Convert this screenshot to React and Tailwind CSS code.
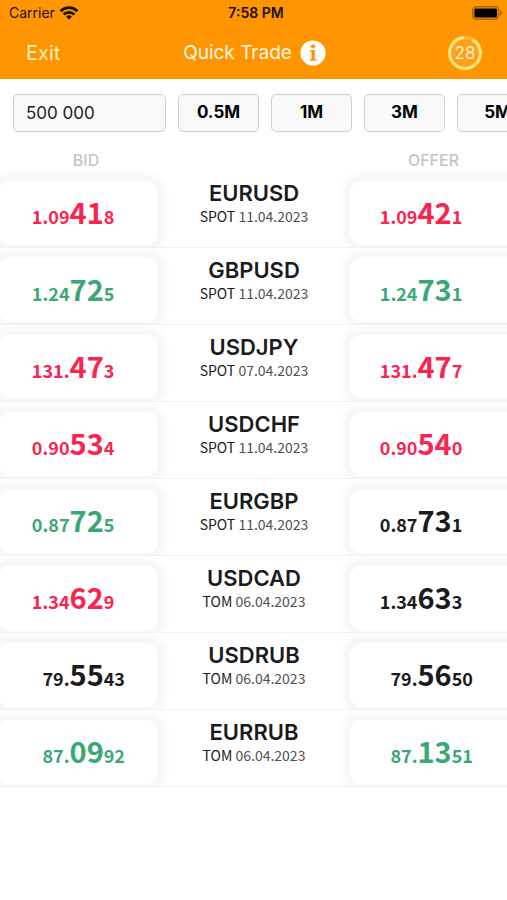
import React, { useState } from "react";

const quotes = [
  { pair: "EURUSD", tenor: "SPOT", date: "11.04.2023", bid: ["1.09", "41", "8"], offer: ["1.09", "42", "1"], bidTrend: "down", offerTrend: "down" },
  { pair: "GBPUSD", tenor: "SPOT", date: "11.04.2023", bid: ["1.24", "72", "5"], offer: ["1.24", "73", "1"], bidTrend: "up", offerTrend: "up" },
  { pair: "USDJPY", tenor: "SPOT", date: "07.04.2023", bid: ["131.", "47", "3"], offer: ["131.", "47", "7"], bidTrend: "down", offerTrend: "down" },
  { pair: "USDCHF", tenor: "SPOT", date: "11.04.2023", bid: ["0.90", "53", "4"], offer: ["0.90", "54", "0"], bidTrend: "down", offerTrend: "down" },
  { pair: "EURGBP", tenor: "SPOT", date: "11.04.2023", bid: ["0.87", "72", "5"], offer: ["0.87", "73", "1"], bidTrend: "up", offerTrend: "flat" },
  { pair: "USDCAD", tenor: "TOM", date: "06.04.2023", bid: ["1.34", "62", "9"], offer: ["1.34", "63", "3"], bidTrend: "down", offerTrend: "flat" },
  { pair: "USDRUB", tenor: "TOM", date: "06.04.2023", bid: ["79.", "55", "43"], offer: ["79.", "56", "50"], bidTrend: "flat", offerTrend: "flat" },
  { pair: "EURRUB", tenor: "TOM", date: "06.04.2023", bid: ["87.", "09", "92"], offer: ["87.", "13", "51"], bidTrend: "up", offerTrend: "up" },
];

const presets = [
  { label: "0.5M", value: "500 000" },
  { label: "1M", value: "1 000 000" },
  { label: "3M", value: "3 000 000" },
  { label: "5M", value: "5 000 000" },
];

const trendColors = {
  up: "text-[#3aa876]",
  down: "text-[#fa2450]",
  flat: "text-[#1b1b1d]",
};

const WifiIcon = () => (
  <svg className="h-4 w-5" viewBox="0 0 20 16" fill="none" stroke="#1a0f00" aria-hidden="true">
    <path d="M1.6 6.1a12 12 0 0 1 16.8 0" strokeWidth="2.9" />
    <path d="M4.7 9.5a7.6 7.6 0 0 1 10.6 0" strokeWidth="2.6" />
    <path d="M10 14.6 7.1 11.8a4.1 4.1 0 0 1 5.8 0z" fill="#1a0f00" stroke="none" />
  </svg>
);

const BatteryIcon = () => (
  <svg className="h-4 w-8" viewBox="0 0 32 16" aria-hidden="true">
    <rect x="1.7" y="1.7" width="26" height="12.6" rx="3.6" fill="none" stroke="#a86400" strokeWidth="1.4" />
    <rect x="3.4" y="3.4" width="22.6" height="9.2" rx="1.2" fill="#000" />
    <path d="M29.2 5.6c1.3.5 2 1.3 2 2.4s-.7 1.9-2 2.4z" fill="#a86400" />
  </svg>
);

const InfoIcon = () => (
  <svg className="size-[26px]" viewBox="0 0 26 26" aria-hidden="true">
    <circle cx="13" cy="13" r="12.6" fill="#fff" />
    <circle cx="13" cy="6.4" r="2.1" fill="#ff9500" />
    <path d="M9.8 10h5v9.2h1.7v1.5H9.8v-1.5h1.7v-7.7H9.8z" fill="#ff9500" />
  </svg>
);

const Timer = ({ seconds }) => (
  <div className="relative flex size-9 items-center justify-center">
    <svg className="absolute inset-0 size-9" viewBox="0 0 36 36" aria-hidden="true">
      <circle cx="18" cy="18" r="15.4" fill="#ffa01a" stroke="#ffb53e" strokeWidth="3.6" />
      <path d="M25.2 4.4A15.4 15.4 0 1 1 17.4 2.6" fill="none" stroke="#ffe680" strokeWidth="2.8" />
    </svg>
    <span className="relative text-[17px] text-[#fff0c4]">{seconds}</span>
  </div>
);

const Price = ({ parts, trend, side, label }) => (
  <button
    aria-label={label}
    className={`flex h-16 items-baseline bg-white font-['Noto_Sans_CJK_SC',sans-serif] text-[18px] leading-[60px] font-bold shadow-[0_0_6px_8px_rgba(0,0,0,0.035)] ${
      side === "bid" ? "rounded-r-xl rounded-l-lg" : "rounded-l-xl"
    } ${trendColors[trend]}`}
  >
    <span className={side === "bid" ? "w-[44%] text-right" : "w-[43%] text-right"}>{parts[0]}</span>
    <span className="text-[29px]">{parts[1]}</span>
    <span>{parts[2]}</span>
  </button>
);

const QuoteRow = ({ quote }) => (
  <li className="grid grid-cols-[158fr_192fr_157fr] overflow-hidden border-b border-[#f1f1f1] pt-[10px] pb-[2px]">
    <Price parts={quote.bid} trend={quote.bidTrend} side="bid" label={`Sell ${quote.pair}`} />
    <div className="text-center text-[#1b1b1d]">
      <h2 className="font-['Inter',sans-serif] text-[22px] leading-6 font-semibold">{quote.pair}</h2>
      <p className="font-['Noto_Sans_CJK_SC',sans-serif] text-[14px] leading-[22px]">
        {quote.tenor} <span className="text-[#505052]">{quote.date}</span>
      </p>
    </div>
    <Price parts={quote.offer} trend={quote.offerTrend} side="offer" label={`Buy ${quote.pair}`} />
  </li>
);

const App = () => {
  const [amount, setAmount] = useState("500 000");

  return (
    <div className="min-h-screen overflow-hidden bg-white font-['Inter',sans-serif] text-black">
      <header className="bg-[#ff9500] pb-2">
        <div className="grid grid-cols-3 items-center pt-[3px] pr-1 pl-[9px] leading-5 text-[#1a0f00]">
          <div className="flex items-center gap-1 text-[14px]">
            <span>Carrier</span>
            <WifiIcon />
          </div>
          <span className="text-center text-[14px] font-semibold">7:58 PM</span>
          <div className="flex justify-end">
            <BatteryIcon />
          </div>
        </div>
        <div className="mt-3 grid grid-cols-[1fr_auto_1fr] items-center pr-6 pl-[26px] text-[20px] leading-9">
          <button className="justify-self-start text-[#ffefbd]">Exit</button>
          <div className="flex items-center gap-2">
            <h1 className="text-[19px] text-[#fff8e2]">Quick Trade</h1>
            <button aria-label="Info">
              <InfoIcon />
            </button>
          </div>
          <div className="justify-self-end">
            <Timer seconds={28} />
          </div>
        </div>
      </header>

      <div className="flex gap-3 overflow-hidden pt-[15px] pl-[13px]">
        <input
          aria-label="Amount"
          className="h-[38px] w-[153px] shrink-0 rounded-[5px] border border-[#cfcfcf] bg-[#f9f9f9] px-3 text-[17px] text-[#222]"
          value={amount}
          onChange={(e) => setAmount(e.target.value)}
        />
        {presets.map((preset) => (
          <button
            key={preset.label}
            className="h-[38px] w-[81px] shrink-0 rounded-[5px] border border-[#cfcfcf] bg-[#f9f9f9] text-[17px] font-bold"
            onClick={() => setAmount(preset.value)}
          >
            {preset.label}
          </button>
        ))}
      </div>

      <div className="grid grid-cols-[172fr_188fr_147fr] pt-[18px] pb-px text-center text-[16px] leading-5 font-medium text-[#c4c4c6]">
        <span>BID</span>
        <span className="col-start-3">OFFER</span>
      </div>

      <ul>
        {quotes.map((quote) => (
          <QuoteRow key={quote.pair} quote={quote} />
        ))}
      </ul>
    </div>
  );
};

export default App;
